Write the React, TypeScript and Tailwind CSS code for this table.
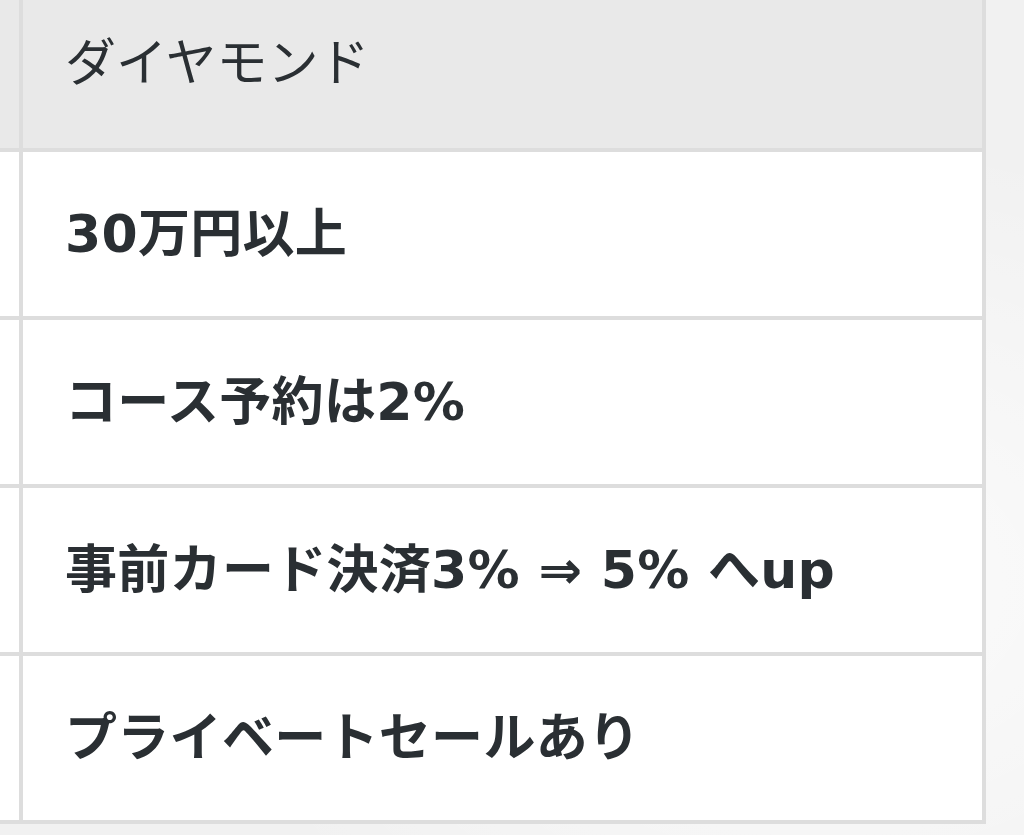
import React from "react";

const rows = [
  "30万円以上",
  "コース予約は2%",
  "事前カード決済3% ⇒ 5% へup",
  "プライベートセールあり",
];

export default function App() {
  return (
    <div
      className="w-[1024px] h-[835px] overflow-hidden bg-[#f1f1f1]"
      style={{
        backgroundImage:
          "radial-gradient(ellipse at 30% 20%, rgba(255,255,255,0.9), rgba(255,255,255,0) 60%), radial-gradient(ellipse at 80% 70%, rgba(255,255,255,0.8), rgba(255,255,255,0) 55%)",
      }}
    >
      <div
        className="grid w-[986px] grid-cols-[19px_959px] gap-[4px] bg-[#dddddd] pr-[4px] pb-[4px] text-[#2a2f33]"
        style={{ fontFamily: '"DejaVu Sans", "Noto Sans CJK JP", sans-serif' }}
      >
        <div className="h-[148px] bg-[#e9e9e9]" />
        <div className="flex h-[148px] items-start bg-[#e9e9e9] pl-[42px] pt-[28px]">
          <span className="text-[51px] font-normal leading-[72px]">ダイヤモンド</span>
        </div>
        {rows.map((r) => (
          <React.Fragment key={r}>
            <div className="h-[164px] bg-white" />
            <div className="flex h-[164px] items-center bg-white pl-[42px]">
              <span className="text-[52px] font-bold leading-[72px] tracking-[0.3px]">{r}</span>
            </div>
          </React.Fragment>
        ))}
      </div>
    </div>
  );
}
